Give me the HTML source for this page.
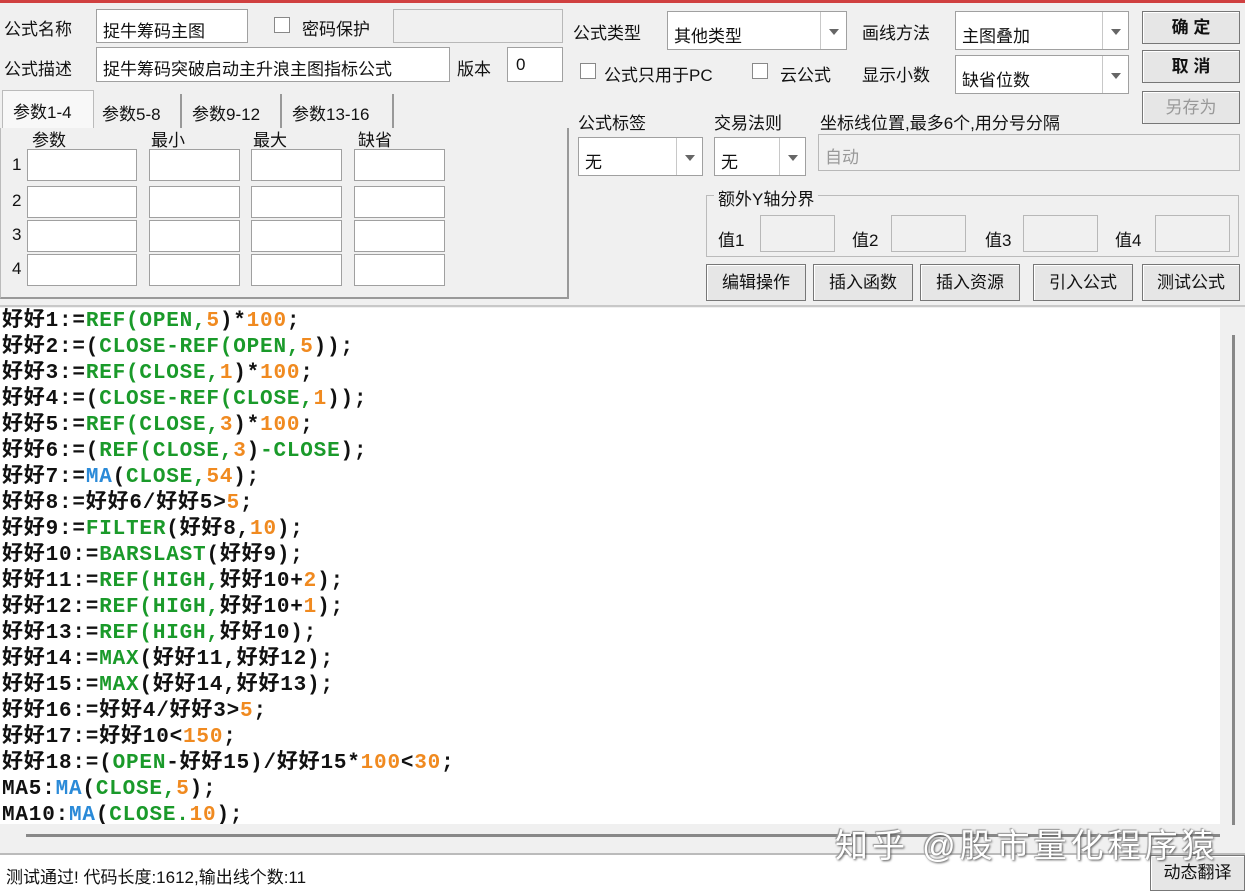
<!DOCTYPE html>
<html><head><meta charset="utf-8"><style>
*{margin:0;padding:0;box-sizing:border-box}
body{width:1245px;height:891px;background:#f0f0f0;position:relative;overflow:hidden;font-family:"Liberation Sans","Noto Sans CJK SC",sans-serif;font-size:17px;color:#111}
.a{position:absolute;white-space:nowrap}
.box{position:absolute;background:#fff;border:1px solid #a0a0a0}
.dis{position:absolute;background:#f0f0f0;border:1px solid #b8b8b8}
.cb{position:absolute;width:16px;height:16px;border:1px solid #888;background:#fff}
.dd{position:absolute;width:26px;right:0;top:0;bottom:0;border-left:1px solid #c8c8c8}
.dd:after{content:"";position:absolute;left:8px;top:50%;margin-top:-2px;border:5px solid transparent;border-top:6px solid #666}
.btn{position:absolute;border:1px solid #777;background:#e6e6e6;text-align:center;font-size:17px;box-shadow:inset 1px 1px 0 #fff}
.code{position:absolute;left:0;top:308px;width:1220px;height:516px;background:#fff;overflow:hidden;padding-top:1px}
.code div{font-family:"Liberation Mono","Noto Sans CJK SC",monospace;font-weight:bold;font-size:21px;letter-spacing:0.8px;height:26px;line-height:26px;white-space:nowrap;padding-left:2px;color:#111}
.g{color:#1a9a2a}.o{color:#f08a20}.b{color:#2a8ad8}
</style></head><body>
<div class="a" style="left:0;top:0;width:1245px;height:3px;background:#d04040"></div>

<div class="a" style="left:4px;top:15px">公式名称</div>
<div class="box" style="left:96px;top:9px;width:152px;height:34px"><span class="a" style="left:6px;top:7px">捉牛筹码主图</span></div>
<div class="cb" style="left:274px;top:17px"></div>
<div class="a" style="left:302px;top:15px">密码保护</div>
<div class="dis" style="left:393px;top:9px;width:170px;height:34px"></div>
<div class="a" style="left:4px;top:55px">公式描述</div>
<div class="box" style="left:96px;top:47px;width:354px;height:35px"><span class="a" style="left:6px;top:7px">捉牛筹码突破启动主升浪主图指标公式</span></div>
<div class="a" style="left:457px;top:55px">版本</div>
<div class="box" style="left:507px;top:47px;width:56px;height:35px"><span class="a" style="left:8px;top:7px">0</span></div>

<!-- tabs -->
<div class="a" style="left:2px;top:90px;width:92px;height:38px;background:#f8f8f8;border:1px solid #bbb;border-bottom:none;font-size:17px;padding:7px 0 0 10px">参数1-4</div>
<div class="a" style="left:94px;top:94px;width:88px;height:34px;border-right:2px solid #999;font-size:17px;padding:6px 0 0 8px">参数5-8</div>
<div class="a" style="left:184px;top:94px;width:98px;height:34px;border-right:2px solid #999;font-size:17px;padding:6px 0 0 8px">参数9-12</div>
<div class="a" style="left:284px;top:94px;width:110px;height:34px;border-right:2px solid #999;font-size:17px;padding:6px 0 0 8px">参数13-16</div>
<div class="a" style="left:0;top:128px;width:569px;height:171px;border:1px solid #bbb;border-top:none;border-right:2px solid #999;border-bottom:2px solid #999"></div>
<div class="a" style="left:32px;top:126px">参数</div>
<div class="a" style="left:151px;top:126px">最小</div>
<div class="a" style="left:253px;top:126px">最大</div>
<div class="a" style="left:358px;top:126px">缺省</div>
<div class="a" style="left:12px;top:155px">1</div><div class="a" style="left:12px;top:191px">2</div><div class="a" style="left:12px;top:225px">3</div><div class="a" style="left:12px;top:259px">4</div>

<div class="box" style="left:27px;top:149px;width:110px;height:32px"></div><div class="box" style="left:149px;top:149px;width:91px;height:32px"></div><div class="box" style="left:251px;top:149px;width:91px;height:32px"></div><div class="box" style="left:354px;top:149px;width:91px;height:32px"></div>
<div class="box" style="left:27px;top:186px;width:110px;height:32px"></div><div class="box" style="left:149px;top:186px;width:91px;height:32px"></div><div class="box" style="left:251px;top:186px;width:91px;height:32px"></div><div class="box" style="left:354px;top:186px;width:91px;height:32px"></div>
<div class="box" style="left:27px;top:220px;width:110px;height:32px"></div><div class="box" style="left:149px;top:220px;width:91px;height:32px"></div><div class="box" style="left:251px;top:220px;width:91px;height:32px"></div><div class="box" style="left:354px;top:220px;width:91px;height:32px"></div>
<div class="box" style="left:27px;top:254px;width:110px;height:32px"></div><div class="box" style="left:149px;top:254px;width:91px;height:32px"></div><div class="box" style="left:251px;top:254px;width:91px;height:32px"></div><div class="box" style="left:354px;top:254px;width:91px;height:32px"></div>

<!-- right panel -->
<div class="a" style="left:573px;top:19px">公式类型</div>
<div class="box" style="left:667px;top:11px;width:180px;height:39px"><span class="a" style="left:6px;top:10px">其他类型</span><div class="dd"></div></div>
<div class="a" style="left:862px;top:19px">画线方法</div>
<div class="box" style="left:955px;top:11px;width:174px;height:39px"><span class="a" style="left:6px;top:10px">主图叠加</span><div class="dd"></div></div>
<div class="cb" style="left:580px;top:63px"></div><div class="a" style="left:604px;top:61px">公式只用于PC</div>
<div class="cb" style="left:752px;top:63px"></div><div class="a" style="left:780px;top:61px">云公式</div>
<div class="a" style="left:862px;top:61px">显示小数</div>
<div class="box" style="left:955px;top:55px;width:174px;height:39px"><span class="a" style="left:6px;top:10px">缺省位数</span><div class="dd"></div></div>
<div class="btn" style="left:1142px;top:11px;width:98px;height:33px;line-height:31px;font-weight:bold">确 定</div>
<div class="btn" style="left:1142px;top:50px;width:98px;height:33px;line-height:31px;font-weight:bold">取 消</div>
<div class="btn" style="left:1142px;top:91px;width:98px;height:33px;line-height:31px;color:#999">另存为</div>

<div class="a" style="left:578px;top:109px">公式标签</div>
<div class="a" style="left:714px;top:109px">交易法则</div>
<div class="a" style="left:820px;top:109px">坐标线位置,最多6个,用分号分隔</div>
<div class="box" style="left:578px;top:137px;width:125px;height:39px"><span class="a" style="left:6px;top:10px">无</span><div class="dd"></div></div>
<div class="box" style="left:714px;top:137px;width:92px;height:39px"><span class="a" style="left:6px;top:10px">无</span><div class="dd"></div></div>
<div class="dis" style="left:818px;top:134px;width:422px;height:37px"><span class="a" style="left:6px;top:8px;color:#999">自动</span></div>

<div class="a" style="left:706px;top:195px;width:533px;height:62px;border:1px solid #bbb"></div>
<div class="a" style="left:714px;top:185px;background:#f0f0f0;padding:0 4px">额外Y轴分界</div>
<div class="a" style="left:718px;top:226px">值1</div><div class="dis" style="left:760px;top:215px;width:75px;height:37px"></div>
<div class="a" style="left:852px;top:226px">值2</div><div class="dis" style="left:891px;top:215px;width:75px;height:37px"></div>
<div class="a" style="left:985px;top:226px">值3</div><div class="dis" style="left:1023px;top:215px;width:75px;height:37px"></div>
<div class="a" style="left:1115px;top:226px">值4</div><div class="dis" style="left:1155px;top:215px;width:75px;height:37px"></div>

<div class="btn" style="left:706px;top:264px;width:100px;height:37px;line-height:35px">编辑操作</div>
<div class="btn" style="left:813px;top:264px;width:100px;height:37px;line-height:35px">插入函数</div>
<div class="btn" style="left:920px;top:264px;width:100px;height:37px;line-height:35px">插入资源</div>
<div class="btn" style="left:1033px;top:264px;width:100px;height:37px;line-height:35px">引入公式</div>
<div class="btn" style="left:1142px;top:264px;width:98px;height:37px;line-height:35px">测试公式</div>

<div class="a" style="left:0;top:305px;width:1245px;height:2px;background:#c8c8c8"></div>
<div class="code">
<div>好好1:=<span class="g">REF(OPEN,</span><span class="o">5</span>)*<span class="o">100</span>;</div>
<div>好好2:=(<span class="g">CLOSE-REF(OPEN,</span><span class="o">5</span>));</div>
<div>好好3:=<span class="g">REF(CLOSE,</span><span class="o">1</span>)*<span class="o">100</span>;</div>
<div>好好4:=(<span class="g">CLOSE-REF(CLOSE,</span><span class="o">1</span>));</div>
<div>好好5:=<span class="g">REF(CLOSE,</span><span class="o">3</span>)*<span class="o">100</span>;</div>
<div>好好6:=(<span class="g">REF(CLOSE,</span><span class="o">3</span>)<span class="g">-CLOSE</span>);</div>
<div>好好7:=<span class="b">MA</span>(<span class="g">CLOSE,</span><span class="o">54</span>);</div>
<div>好好8:=好好6/好好5&gt;<span class="o">5</span>;</div>
<div>好好9:=<span class="g">FILTER</span>(好好8,<span class="o">10</span>);</div>
<div>好好10:=<span class="g">BARSLAST</span>(好好9);</div>
<div>好好11:=<span class="g">REF(HIGH,</span>好好10+<span class="o">2</span>);</div>
<div>好好12:=<span class="g">REF(HIGH,</span>好好10+<span class="o">1</span>);</div>
<div>好好13:=<span class="g">REF(HIGH,</span>好好10);</div>
<div>好好14:=<span class="g">MAX</span>(好好11,好好12);</div>
<div>好好15:=<span class="g">MAX</span>(好好14,好好13);</div>
<div>好好16:=好好4/好好3&gt;<span class="o">5</span>;</div>
<div>好好17:=好好10&lt;<span class="o">150</span>;</div>
<div>好好18:=(<span class="g">OPEN</span>-好好15)/好好15*<span class="o">100</span>&lt;<span class="o">30</span>;</div>
<div>MA5:<span class="b">MA</span>(<span class="g">CLOSE,</span><span class="o">5</span>);</div>
<div>MA10:<span class="b">MA</span>(<span class="g">CLOSE.</span><span class="o">10</span>);</div>
</div>
<div class="a" style="left:1220px;top:308px;width:25px;height:516px;background:#f0f0f0"></div>
<div class="a" style="left:1232px;top:335px;width:3px;height:490px;background:#888"></div>
<div class="a" style="left:0;top:824px;width:1220px;height:30px;background:#f0f0f0"></div>
<div class="a" style="left:26px;top:834px;width:1194px;height:3px;background:#888"></div>
<div class="a" style="left:0;top:853px;width:1245px;height:2px;background:#bbb"></div>
<div class="a" style="left:0;top:855px;width:1150px;height:36px;background:#fff"></div>
<div class="a" style="left:6px;top:863px;font-size:17px">测试通过! 代码长度:1612,输出线个数:11</div>
<div class="btn" style="left:1150px;top:855px;width:95px;height:36px;line-height:34px;font-size:17px">动态翻译</div>
<div class="a" style="left:835px;top:819px;font-size:33px;letter-spacing:4px;color:#fff;text-shadow:1px 1px 2px #555,-1px -1px 1px #999">知乎 @股市量化程序猿</div>
</body></html>
